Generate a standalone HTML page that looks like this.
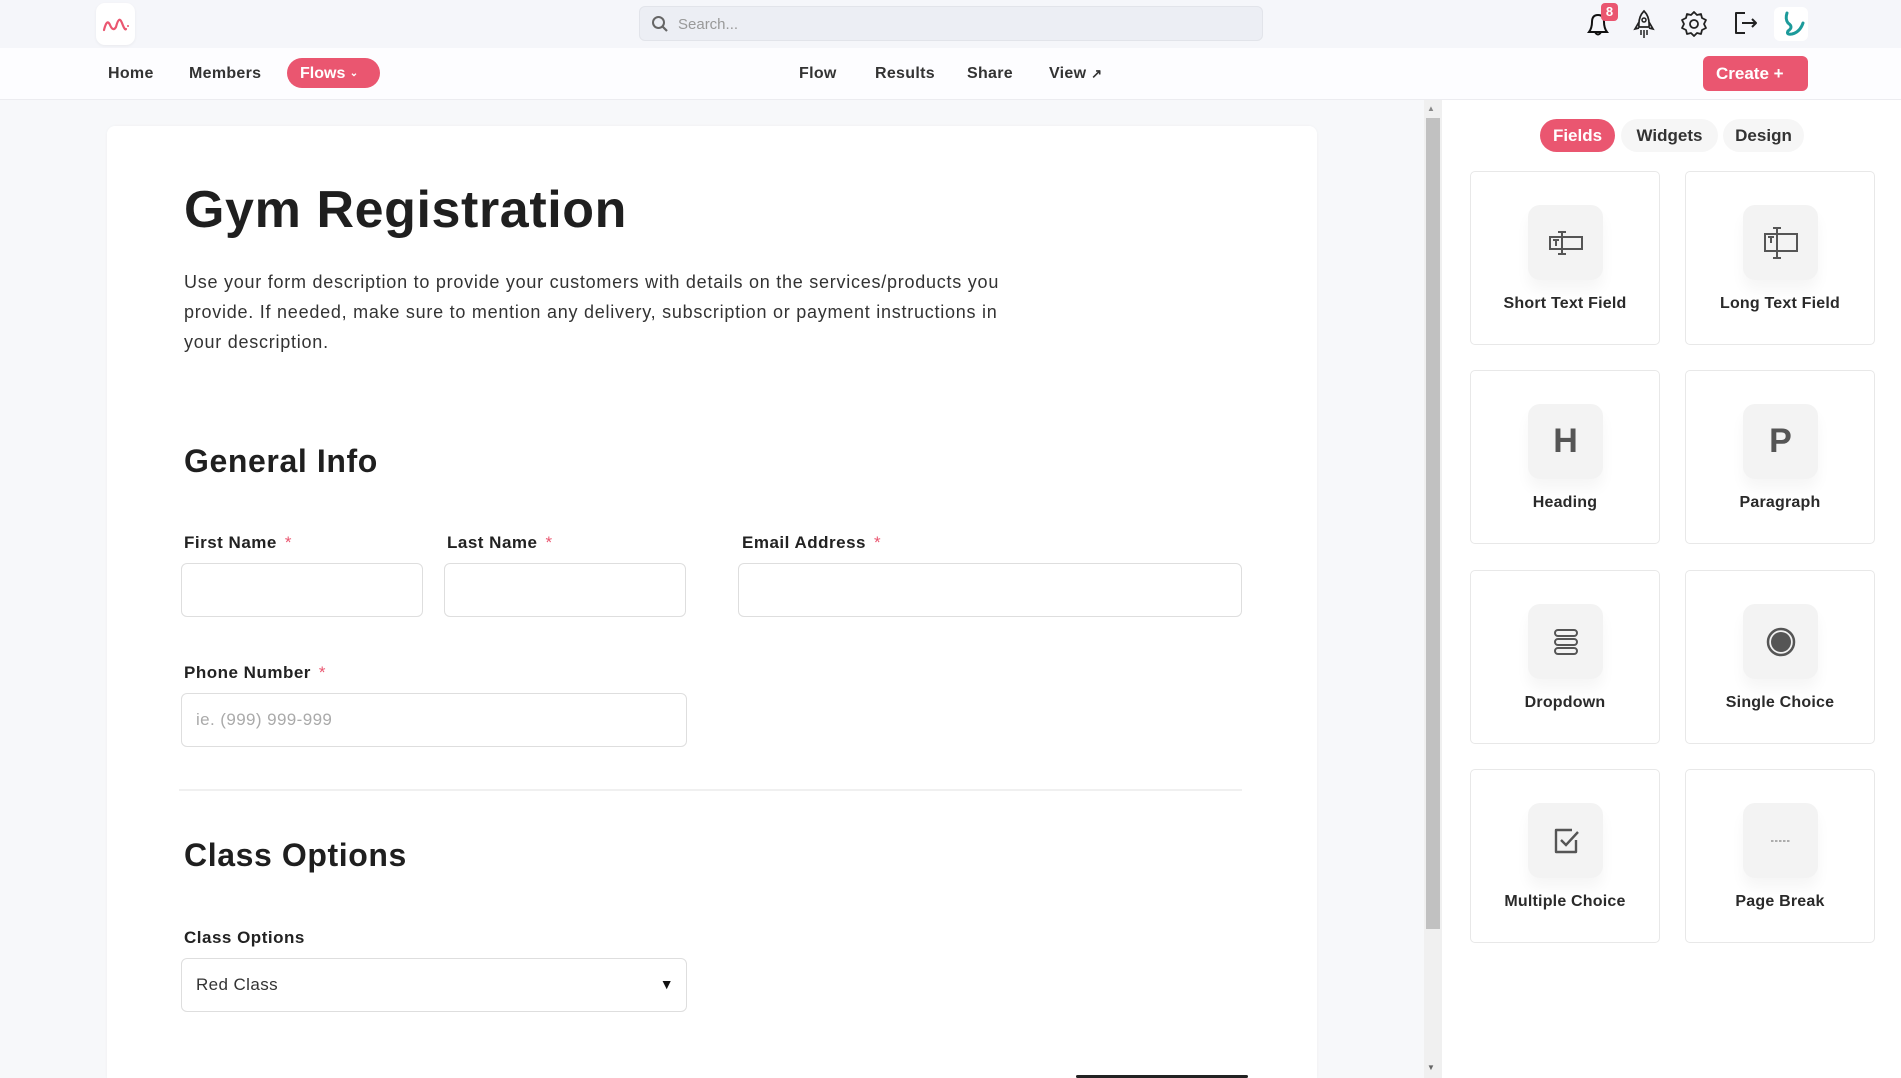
<!DOCTYPE html>
<html><head><meta charset="utf-8">
<style>
*{box-sizing:border-box;margin:0;padding:0}
html,body{width:1901px;height:1078px;overflow:hidden}
body{background:#f7f8fa;font-family:"Liberation Sans",sans-serif;color:#222;position:relative}
.abs{position:absolute}
.top{left:0;top:0;width:1901px;height:48px;background:#f5f6fa}
.logo{left:96px;top:3px;width:39px;height:42px;background:#fff;border-radius:9px;box-shadow:0 1px 3px rgba(0,0,0,.05)}
.search{left:639px;top:6px;width:624px;height:35px;background:#eceef4;border:1px solid #e2e4ea;border-radius:6px}
.search span{position:absolute;left:38px;top:9px;font-size:15px;color:#999}
.nav{left:0;top:48px;width:1901px;height:52px;background:#fdfdff;border-bottom:1px solid #ececf0}
.nl{font-size:16px;font-weight:bold;color:#333;top:65px;letter-spacing:.3px}
.pill{left:287px;top:58px;width:93px;height:30px;border-radius:15px;background:#ea5670;color:#fff;font-weight:bold;font-size:16px;padding:7px 0 0 13px}
.create{left:1703px;top:56px;width:105px;height:35px;border-radius:6px;background:#ea5670;color:#fff;font-weight:bold;font-size:17px;padding:8px 0 0 13px}
.card{left:107px;top:126px;width:1210px;height:952px;background:#fff;border-radius:8px 8px 0 0;box-shadow:0 0 3px rgba(0,0,0,.04)}
h1{position:absolute;left:184px;top:180px;font-size:52px;font-weight:bold;color:#1f1f1f;letter-spacing:.6px}
.desc{left:184px;top:267px;font-size:18px;line-height:30px;color:#333;letter-spacing:.75px}
h2{position:absolute;font-size:32px;font-weight:bold;color:#1f1f1f;left:184px;letter-spacing:.6px}
.lab{font-size:17px;font-weight:bold;color:#222;letter-spacing:.5px}
.lab b{color:#ea5670;font-weight:normal;margin-left:8px}
.inp{border:1px solid #dedede;border-radius:6px;background:#fff;height:54px}
.inp span{position:absolute;left:14px;top:16px;font-size:17px;letter-spacing:.4px}
.sb{left:1424px;top:100px;width:18px;height:978px;background:#f0f0f0}
.thumb{left:1426px;top:118px;width:14px;height:811px;background:#c1c1c1}
.panel{left:1442px;top:100px;width:459px;height:978px;background:#fff}
.tab{top:119px;height:33px;border-radius:17px;background:#f6f6f6;font-size:17px;font-weight:bold;color:#333;text-align:center;padding-top:7px}
.fc{width:190px;height:174px;border:1px solid #e8e8e8;border-radius:5px;background:#fff}
.fc .ib{position:absolute;left:57px;top:33px;width:75px;height:75px;border-radius:12px;background:#f3f3f3;box-shadow:0 10px 14px rgba(0,0,0,.04);display:flex;align-items:center;justify-content:center}
.fc .t{position:absolute;left:0;width:100%;top:123px;text-align:center;font-size:16px;font-weight:bold;color:#2a2a2a;letter-spacing:.2px}
</style></head><body>
<div class="abs top"></div>
<div class="abs logo"><svg width="39" height="42" viewBox="0 0 39 42"><path d="M8 27 Q11 15 14 22 T20 24 Q23 12 26 20 T30 26" fill="none" stroke="#ea5670" stroke-width="2.2" stroke-linecap="round"/><circle cx="32" cy="23" r="1" fill="#ea5670"/></svg></div>
<div class="abs search"><svg class="abs" style="left:11px;top:8px" width="18" height="18" viewBox="0 0 18 18"><circle cx="7.5" cy="7.5" r="5.5" fill="none" stroke="#666" stroke-width="2"/><path d="M11.5 11.5 L16 16" stroke="#666" stroke-width="2.2"/></svg><span>Search...</span></div>
<svg class="abs" style="left:1583px;top:7px" width="30" height="30" viewBox="0 0 30 30"><path d="M6 25 Q9 21 9 15 Q9 8 15 8 Q21 8 21 15 Q21 21 24 25 Z M12 25 Q15 30 18 25" fill="none" stroke="#111" stroke-width="2"/></svg>
<div class="abs" style="left:1601px;top:3px;width:17px;height:18px;background:#ea5670;border-radius:4px;color:#fff;font-size:13px;font-weight:bold;text-align:center;line-height:18px">8</div>
<svg class="abs" style="left:1631px;top:9px" width="26" height="30" viewBox="0 0 26 30"><path d="M13 2 Q19 8 18 18 L8 18 Q7 8 13 2Z M8 13 L4 20 L8 19 M18 13 L22 20 L18 19" fill="none" stroke="#222" stroke-width="1.7"/><circle cx="13" cy="11" r="2" fill="none" stroke="#222" stroke-width="1.5"/><path d="M10 21v5M13 21v8M16 21v5" stroke="#222" stroke-width="1.5"/></svg>
<svg class="abs" style="left:1679px;top:9px" width="30" height="30" viewBox="0 0 30 30"><path d="M15 3 L18 6 L22 5 L23 9 L27 11 L25 15 L27 19 L23 21 L22 25 L18 24 L15 27 L12 24 L8 25 L7 21 L3 19 L5 15 L3 11 L7 9 L8 5 L12 6 Z" fill="none" stroke="#222" stroke-width="1.8" stroke-linejoin="round"/><circle cx="15" cy="15" r="4" fill="none" stroke="#222" stroke-width="1.8"/></svg>
<svg class="abs" style="left:1731px;top:9px" width="28" height="28" viewBox="0 0 28 28"><path d="M14 4 H5 V24 H14 M11 14 H25 M21 10 L25 14 L21 18" fill="none" stroke="#222" stroke-width="2" stroke-linejoin="round"/></svg>
<div class="abs" style="left:1774px;top:7px;width:34px;height:34px;background:#fff;border-radius:6px"><svg width="34" height="34" viewBox="0 0 34 34"><path d="M13 6 Q11 12 14 16 Q20 20 14 24 Q12 28 18 27 Q26 25 29 16" fill="none" stroke="#1c9a9a" stroke-width="3" stroke-linecap="round"/></svg></div>

<div class="abs nav"></div>
<div class="abs nl" style="left:108px">Home</div>
<div class="abs nl" style="left:189px">Members</div>
<div class="abs pill">Flows <span style="font-size:10px;vertical-align:2px">&#8964;</span></div>
<div class="abs nl" style="left:799px">Flow</div>
<div class="abs nl" style="left:875px">Results</div>
<div class="abs nl" style="left:967px">Share</div>
<div class="abs nl" style="left:1049px">View <span style="font-size:13px">&#8599;</span></div>
<div class="abs create">Create +</div>

<div class="abs card"></div>
<h1>Gym Registration</h1>
<div class="abs desc">Use your form description to provide your customers with details on the services/products you<br>provide. If needed, make sure to mention any delivery, subscription or payment instructions in<br>your description.</div>
<h2 style="top:443px">General Info</h2>
<div class="abs lab" style="left:184px;top:533px">First Name<b>*</b></div>
<div class="abs lab" style="left:447px;top:533px">Last Name<b>*</b></div>
<div class="abs lab" style="left:742px;top:533px">Email Address<b>*</b></div>
<div class="abs inp" style="left:181px;top:563px;width:242px"></div>
<div class="abs inp" style="left:444px;top:563px;width:242px"></div>
<div class="abs inp" style="left:738px;top:563px;width:504px"></div>
<div class="abs lab" style="left:184px;top:663px">Phone Number<b>*</b></div>
<div class="abs inp" style="left:181px;top:693px;width:506px"><span style="color:#aaa">ie. (999) 999-999</span></div>
<div class="abs" style="left:179px;top:789px;width:1063px;height:2px;background:#f0f0f0"></div>
<h2 style="top:837px">Class Options</h2>
<div class="abs lab" style="left:184px;top:928px">Class Options</div>
<div class="abs inp" style="left:181px;top:958px;width:506px"><span style="color:#333">Red Class</span><span style="left:auto;right:12px;top:17px;font-size:14px;color:#111">&#9660;</span></div>
<div class="abs" style="left:1076px;top:1075px;width:172px;height:3px;background:#222;border-radius:2px"></div>

<div class="abs sb"></div>
<div class="abs thumb"></div>
<div class="abs" style="left:1427px;top:104px;font-size:8px;color:#888">&#9650;</div>
<div class="abs" style="left:1427px;top:1063px;font-size:8px;color:#666">&#9660;</div>
<div class="abs panel"></div>
<div class="abs tab" style="left:1540px;width:75px;background:#ea5670;color:#fff">Fields</div>
<div class="abs tab" style="left:1621px;width:97px">Widgets</div>
<div class="abs tab" style="left:1723px;width:81px">Design</div>

<div class="abs fc" style="left:1470px;top:171px"><div class="ib"><svg width="36" height="26" viewBox="0 0 36 26"><rect x="2" y="7" width="32" height="12" fill="none" stroke="#555" stroke-width="2"/><path d="M14 2v22M10 2h8M10 24h8M5 10h6M8 10v6" stroke="#555" stroke-width="2"/></svg></div><div class="t">Short Text Field</div></div>
<div class="abs fc" style="left:1685px;top:171px"><div class="ib"><svg width="36" height="32" viewBox="0 0 36 32"><rect x="2" y="7" width="32" height="17" fill="none" stroke="#555" stroke-width="2"/><path d="M14 1v30M10 1h8M10 31h8M5 10h6M8 10v6" stroke="#555" stroke-width="2"/></svg></div><div class="t">Long Text Field</div></div>
<div class="abs fc" style="left:1470px;top:370px"><div class="ib"><span style="font-size:34px;font-weight:bold;color:#555">H</span></div><div class="t">Heading</div></div>
<div class="abs fc" style="left:1685px;top:370px"><div class="ib"><span style="font-size:34px;font-weight:bold;color:#555">P</span></div><div class="t">Paragraph</div></div>
<div class="abs fc" style="left:1470px;top:570px"><div class="ib"><svg width="26" height="28" viewBox="0 0 26 28"><rect x="2" y="2" width="22" height="6" rx="3" fill="none" stroke="#555" stroke-width="2"/><rect x="2" y="11" width="22" height="6" rx="3" fill="none" stroke="#555" stroke-width="2"/><rect x="2" y="20" width="22" height="6" rx="3" fill="none" stroke="#555" stroke-width="2"/></svg></div><div class="t">Dropdown</div></div>
<div class="abs fc" style="left:1685px;top:570px"><div class="ib"><svg width="32" height="32" viewBox="0 0 32 32"><circle cx="16" cy="16" r="13" fill="none" stroke="#555" stroke-width="2.5"/><circle cx="16" cy="16" r="10" fill="#555"/></svg></div><div class="t">Single Choice</div></div>
<div class="abs fc" style="left:1470px;top:769px"><div class="ib"><svg width="28" height="28" viewBox="0 0 28 28"><path d="M20 3 H4 V25 H24 V13" fill="none" stroke="#555" stroke-width="2.4" stroke-linejoin="round"/><path d="M9 13 L14 18 L26 5" fill="none" stroke="#555" stroke-width="2.4"/></svg></div><div class="t">Multiple Choice</div></div>
<div class="abs fc" style="left:1685px;top:769px"><div class="ib"><svg width="20" height="4" viewBox="0 0 20 4"><path d="M0 2h20" stroke="#666" stroke-width="1" stroke-dasharray="2.5 1.5"/></svg></div><div class="t">Page Break</div></div>
</body></html>
